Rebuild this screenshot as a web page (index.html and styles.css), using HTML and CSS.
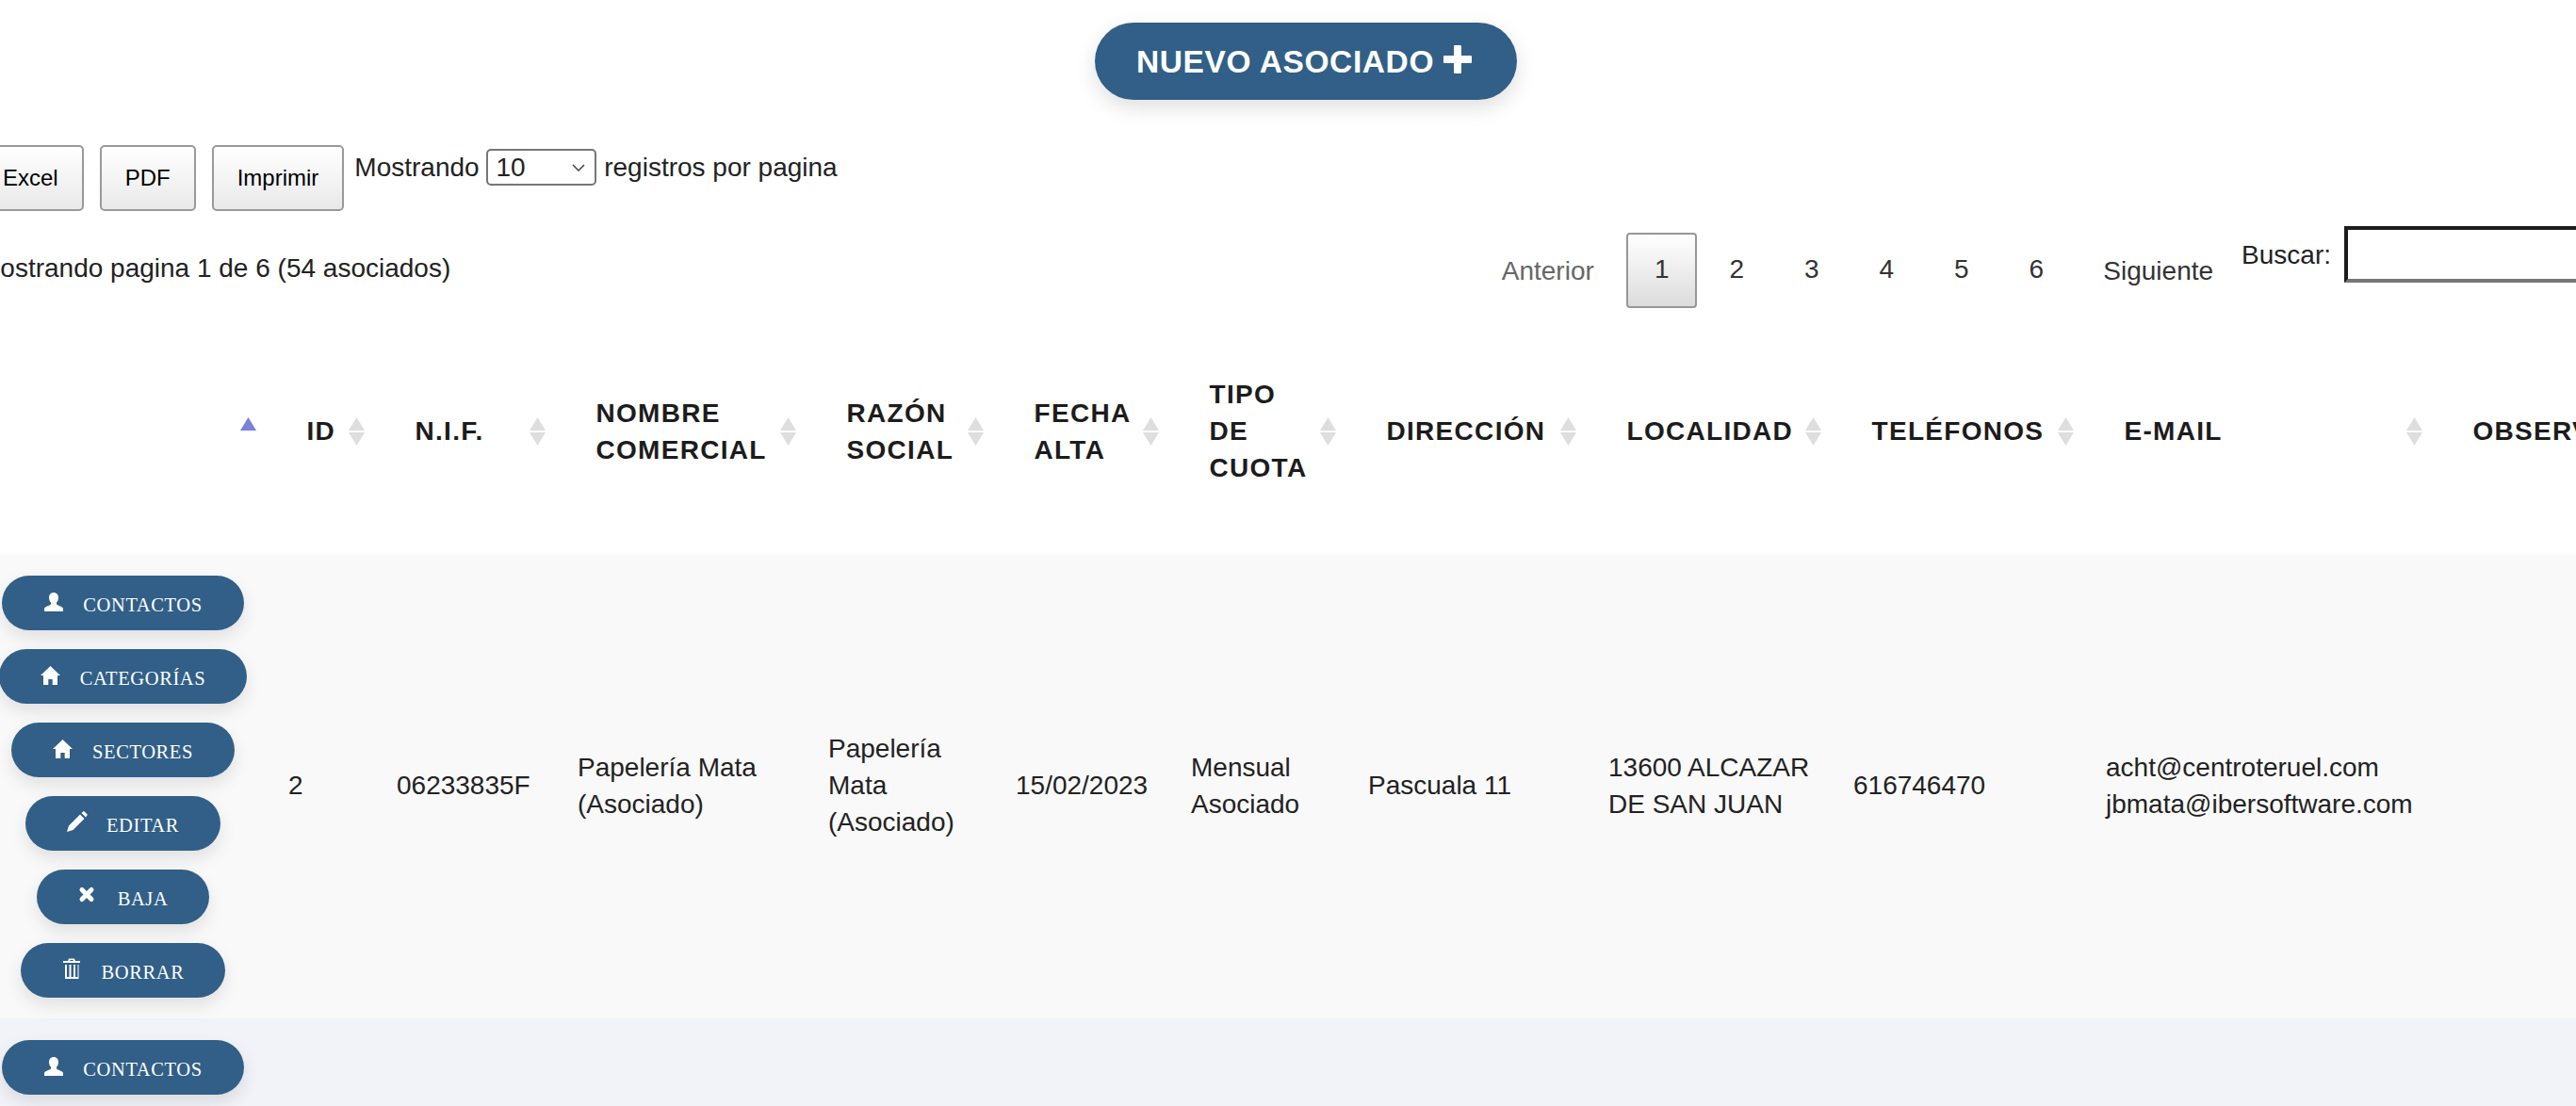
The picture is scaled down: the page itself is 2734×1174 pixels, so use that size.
FILE: index.html
```html
<!DOCTYPE html>
<html lang="es">
<head>
  <meta charset="utf-8">
  <title>Asociados</title>
  <link rel="stylesheet" href="styles.css">
</head>
<body>
  <svg class="defs" width="0" height="0">
    <symbol id="i-user" viewBox="0 0 22 22"><path d="M11 2c3.200 0 5 2.400 5 5.200 0 2.500-.9 4.300-2 5.400v1.600c0 1 7 2.800 7 4.800v3H1v-3c0-2 7-3.800 7-4.800v-1.600C6.900 11.500 6 9.700 6 7.200 6 4.400 7.800 2 11 2z"/></symbol>
    <symbol id="i-home" viewBox="0 0 22 22"><path d="M10.500 2L21 12h-3v10h-5.300v-6H8.300v6H3V12H0z"/></symbol>
    <symbol id="i-pencil" viewBox="0 0 22 22"><path d="M0 22l2-6.500L14 3.500 18.500 8l-12 12zM15.500 2l1.700-1.600q.7-.6 1.400 0l2.800 2.800q.6.7 0 1.400L20 6.500z"/></symbol>
    <symbol id="i-remove" viewBox="0 0 22 22"><path d="M4 5.500L14 15.500M14 5.500L4 15.500" stroke="#fff" stroke-width="5" stroke-linecap="round"/></symbol>
    <symbol id="i-trash" viewBox="0 0 22 22"><path d="M6 3l1-2.500h6L14 3h5v2H1V3zM8 3h4l-.5-1h-3zM3 7h2v13h2.500V7h2v13h2.500V7h2v13H16.500V7h1v15H3z"/></symbol>
  </svg>

  <div class="page">
    <div class="top">
      <a class="btn-nuevo">NUEVO ASOCIADO
        <svg class="plus" viewBox="0 0 30 30"><path d="M11 1q0-1 1-1h6q1 0 1 1v10h10q1 0 1 1v6q0 1-1 1H19v10q0 1-1 1h-6q-1 0-1-1V19H1q-1 0-1-1v-6q0-1 1-1h10z"/></svg>
      </a>
    </div>

    <div class="toolbar">
      <button class="dt-btn">Excel</button>
      <button class="dt-btn">PDF</button>
      <button class="dt-btn">Imprimir</button>
      <label class="length">Mostrando
        <select>
          <option>10</option>
          <option>25</option>
          <option>50</option>
        </select>
        registros por pagina</label>
    </div>

    <div class="info-row">
      <div class="info">Mostrando pagina 1 de 6 (54 asociados)</div>
      <div class="paginate">
        <a class="pg-text pg-off">Anterior</a>
        <a class="pg-num current">1</a>
        <a class="pg-num">2</a>
        <a class="pg-num">3</a>
        <a class="pg-num">4</a>
        <a class="pg-num">5</a>
        <a class="pg-num">6</a>
        <a class="pg-text">Siguiente</a>
      </div>
      <label class="search">Buscar: <input type="text"></label>
    </div>

    <table class="tabla">
      <colgroup>
        <col class="c-acciones">
        <col class="c-id">
        <col class="c-nif">
        <col class="c-nombre">
        <col class="c-razon">
        <col class="c-fecha">
        <col class="c-tipo">
        <col class="c-dir">
        <col class="c-loc">
        <col class="c-tel">
        <col class="c-mail">
        <col class="c-obs">
      </colgroup>
      <thead>
        <tr>
          <th class="asc"></th>
          <th>ID</th>
          <th>N.I.F.</th>
          <th>NOMBRE COMERCIAL</th>
          <th>RAZÓN SOCIAL</th>
          <th>FECHA ALTA</th>
          <th>TIPO<br>DE<br>CUOTA</th>
          <th>DIRECCIÓN</th>
          <th>LOCALIDAD</th>
          <th>TELÉFONOS</th>
          <th>E-MAIL</th>
          <th>OBSERVACIONES</th>
        </tr>
      </thead>
      <tbody>
        <tr class="impar">
          <td>
            <div class="acciones">
              <a class="btn-acc"><svg class="ico"><use href="#i-user"/></svg>CONTACTOS</a>
              <a class="btn-acc"><svg class="ico"><use href="#i-home"/></svg>CATEGORÍAS</a>
              <a class="btn-acc"><svg class="ico"><use href="#i-home"/></svg>SECTORES</a>
              <a class="btn-acc"><svg class="ico"><use href="#i-pencil"/></svg>EDITAR</a>
              <a class="btn-acc"><svg class="ico"><use href="#i-remove"/></svg>BAJA</a>
              <a class="btn-acc"><svg class="ico"><use href="#i-trash"/></svg>BORRAR</a>
            </div>
          </td>
          <td>2</td>
          <td>06233835F</td>
          <td>Papelería Mata (Asociado)</td>
          <td>Papelería Mata (Asociado)</td>
          <td>15/02/2023</td>
          <td>Mensual Asociado</td>
          <td>Pascuala 11</td>
          <td>13600 ALCAZAR DE SAN JUAN</td>
          <td>616746470</td>
          <td>acht@centroteruel.com<br>jbmata@ibersoftware.com</td>
          <td></td>
        </tr>
        <tr class="par">
          <td>
            <div class="acciones">
              <a class="btn-acc"><svg class="ico"><use href="#i-user"/></svg>CONTACTOS</a>
            </div>
          </td>
          <td colspan="11"></td>
        </tr>
      </tbody>
    </table>
  </div>
</body>
</html>
```

FILE: styles.css
```css
html, body {
  margin: 0;
  padding: 0;
  height: 100vh;
  overflow: hidden;
  background-color: #fff;
}

body {
  font-family: "Liberation Sans", Arial, sans-serif;
  font-size: 28px;
  line-height: 39px;
  color: #222;
}

.defs {
  display: none;
}

/* la tabla es mas ancha que la ventana */
.page {
  width: 2822px;
  margin-left: -25px;
}

.top {
  display: flex;
  justify-content: center;
  padding-top: 24px;
}

.btn-nuevo {
  display: flex;
  align-items: center;
  box-sizing: border-box;
  height: 82px;
  padding: 0 48px 0 44px;
  border-radius: 41px;
  background-color: #315f87;
  color: #fff;
  font-size: 33.500px;
  font-weight: bold;
  letter-spacing: 0.6px;
  box-shadow: 0 8px 22px rgba(0, 0, 0, 0.13);
}

.plus {
  width: 30px;
  height: 30px;
  margin-left: 10px;
  margin-top: -4px;
  fill: #fff;
}

.toolbar {
  display: flex;
  align-items: flex-start;
  margin-top: 48px;
  padding-left: 1px;
}

.dt-btn {
  box-sizing: border-box;
  height: 70px;
  margin-right: 17px;
  padding: 0 25px;
  border: 2px solid #999;
  border-radius: 5px;
  background: linear-gradient(#fff, #e9e9e9);
  color: #000;
  font-family: inherit;
  font-size: 24px;
}

.dt-btn:nth-child(3) {
  margin-right: 11px;
}

.length {
  margin-top: 4px;
}

.length select {
  box-sizing: border-box;
  width: 117px;
  height: 39px;
  padding: 0 0 0 8px;
  border: 2px solid #767676;
  border-radius: 5px;
  appearance: none;
  background: #fff url("data:image/svg+xml,%3Csvg xmlns='http://www.w3.org/2000/svg' width='14' height='8'%3E%3Cpath fill='none' stroke='%23444' stroke-width='1.500' d='M1 1l6 6 6-6'/%3E%3C/svg%3E") no-repeat right 10px center;
  color: #222;
  font-family: inherit;
  font-size: 28px;
  line-height: 35px;
  vertical-align: top;
}

.info-row {
  display: flex;
  align-items: flex-start;
  height: 87px;
  margin-top: 16px;
}

.info {
  margin-top: 25px;
  padding-left: 2px;
}

.paginate {
  display: flex;
  align-items: center;
  gap: 4.500px;
  margin-top: 7px;
  margin-left: auto;
}

.pg-text {
  padding: 0 36px;
  color: #333;
}

.pg-off {
  padding-right: 30px;
  color: #666;
}

.pg-num {
  box-sizing: border-box;
  width: 75px;
  height: 80px;
  border: 2px solid transparent;
  border-radius: 4px;
  color: #333;
  line-height: 74px;
  text-align: center;
}

.pg-num.current {
  border-color: #979797;
  background: linear-gradient(#fff, #dcdcdc);
}

.paginate .pg-text:last-child {
  padding-left: 29px;
  padding-right: 0;
}

.search {
  display: flex;
  align-items: center;
  gap: 14px;
  margin-left: 30px;
}

.search input {
  box-sizing: border-box;
  width: 309px;
  height: 60px;
  padding: 0;
  border: 4px solid;
  border-color: #1c1c1c #767676 #767676 #1c1c1c;
}

.tabla {
  table-layout: fixed;
  width: 2920px;
  border-collapse: collapse;
}

.c-acciones { width: 311px; }
.c-id { width: 115px; }
.c-nif { width: 192px; }
.c-nombre { width: 266px; }
.c-razon { width: 199px; }
.c-fecha { width: 186px; }
.c-tipo { width: 188px; }
.c-dir { width: 255px; }
.c-loc { width: 260px; }
.c-tel { width: 268px; }
.c-mail { width: 370px; }
.c-obs { width: 310px; }

.tabla th {
  box-sizing: border-box;
  height: 261px;
  padding: 0 36px 0 39.500px;
  color: #1c1c1c;
  font-weight: bold;
  letter-spacing: 1.300px;
  text-align: left;
  background-image: url("data:image/svg+xml,%3Csvg xmlns='http://www.w3.org/2000/svg' width='17' height='30'%3E%3Cpath fill='%23dedede' d='M8.500 0L17 14H0zM0 16h17L8.500 30z'/%3E%3C/svg%3E");
  background-repeat: no-repeat;
  background-position: right 14px center;
}

.tabla th.asc {
  background-image: url("data:image/svg+xml,%3Csvg xmlns='http://www.w3.org/2000/svg' width='17' height='30'%3E%3Cpath fill='%237b80d8' d='M8.500 0L17 14H0z'/%3E%3C/svg%3E");
}

.tabla td {
  padding: 0 20px 2px;
  vertical-align: middle;
}

.tabla td:first-child {
  padding-bottom: 0;
}

.impar td {
  background-color: #f9f9f9;
}

.par td {
  background-color: #f1f3f8;
}

.acciones {
  display: flex;
  flex-direction: column;
  align-items: center;
  gap: 20px;
  padding: 23px 0 22px;
}

.btn-acc {
  display: block;
  box-sizing: border-box;
  height: 58px;
  padding: 4px 44px 0;
  border-radius: 29px;
  background-color: #315f87;
  color: #fff;
  font-family: "Liberation Serif", "Times New Roman", serif;
  font-size: 20.500px;
  letter-spacing: 0.6px;
  line-height: 54px;
  white-space: nowrap;
  box-shadow: 0 8px 18px rgba(0, 0, 0, 0.1);
}

.ico {
  width: 22px;
  height: 22px;
  margin-right: 20px;
  fill: #fff;
}
```
